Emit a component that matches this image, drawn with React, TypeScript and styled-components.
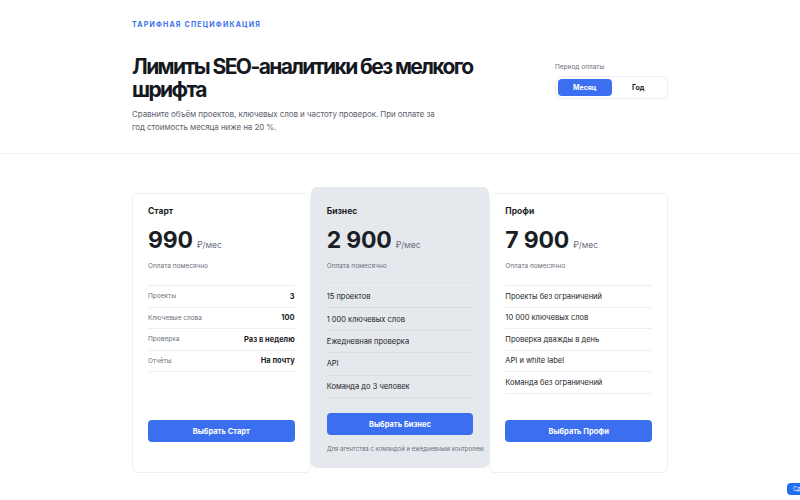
import React from 'react';
import styled, { createGlobalStyle } from 'styled-components';

const GlobalStyle = createGlobalStyle`
  * { box-sizing: border-box; }
  body {
    margin: 0;
    background: #ffffff;
    font-family: Inter, "Noto Sans", sans-serif;
    color: #1b1e25;
  }
`;

const Header = styled.header`
  border-bottom: 1px solid #eff0f2;
  padding: 20px 0 20px;
`;

const Inner = styled.div`
  width: 536px;
  margin: 0 auto;
`;

const HeaderRow = styled.div`
  display: flex;
  justify-content: space-between;
  align-items: flex-start;
`;

const Eyebrow = styled.div`
  font-size: 7px;
  font-weight: 700;
  letter-spacing: 1.2px;
  color: #3c6ff0;
  text-transform: uppercase;
  margin-bottom: 26px;
`;

const Title = styled.h1`
  margin: 0 0 7px;
  font-size: 21px;
  line-height: 23px;
  font-weight: 700;
  letter-spacing: -1.6px;
  width: 360px;
  color: #15181f;
`;

const Lead = styled.p`
  margin: 0;
  width: 312px;
  font-size: 8px;
  letter-spacing: -0.08px;
  line-height: 12.5px;
  color: #5d626d;
`;

const Period = styled.div`
  margin-top: 8px;
  width: 113px;
`;

const PeriodLabel = styled.div`
  font-size: 6.5px;
  color: #6b707b;
  margin-bottom: 5px;
`;

const Toggle = styled.div`
  display: grid;
  grid-template-columns: 1fr 1fr;
  padding: 2px;
  border: 1px solid #eceef1;
  border-radius: 6px;
  background: #fff;
`;

const ToggleButton = styled.button<{ $active?: boolean }>`
  border: 0;
  height: 17px;
  border-radius: 4px;
  font-family: inherit;
  font-size: 7px;
  font-weight: 700;
  background: ${({ $active }) => ($active ? '#3c6ff0' : 'transparent')};
  color: ${({ $active }) => ($active ? '#ffffff' : '#1b1e25')};
`;

const Plans = styled.div`
  display: grid;
  grid-template-columns: repeat(3, minmax(0, 1fr));
  align-items: start;
  margin-top: 39px;
`;

const Card = styled.section<{ $featured?: boolean }>`
  display: flex;
  flex-direction: column;
  min-height: ${({ $featured }) => ($featured ? '281px' : '280px')};
  margin-top: ${({ $featured }) => ($featured ? '-6px' : '0')};
  padding: ${({ $featured }) => ($featured ? '18px' : '12px')} 15px 15px;
  border-radius: 6px;
  background: ${({ $featured }) => ($featured ? '#e5e8ed' : '#ffffff')};
  border: 1px solid ${({ $featured }) => ($featured ? '#e5e8ed' : '#eceef1')};
  position: relative;
  z-index: ${({ $featured }) => ($featured ? 1 : 0)};
`;

const PlanName = styled.h2`
  margin: 0 0 11px;
  font-size: 8.5px;
  line-height: 10px;
  font-weight: 700;
`;

const PriceRow = styled.div`
  display: flex;
  align-items: baseline;
  gap: 4px;
  margin-bottom: 9px;
`;

const Price = styled.span`
  font-size: 23px;
  font-weight: 700;
  letter-spacing: -0.2px;
  line-height: 26px;
`;

const Unit = styled.span`
  font-size: 8.5px;
  color: #6b707b;
`;

const Billing = styled.div`
  font-size: 6.5px;
  line-height: 8px;
  color: #6b707b;
  margin-bottom: 15px;
`;

const List = styled.ul`
  list-style: none;
  margin: 0;
  padding: 0;
  border-top: 1px solid #eceef1;
`;

const Item = styled.li<{ $tall?: boolean }>`
  display: flex;
  justify-content: space-between;
  align-items: center;
  height: ${({ $tall }) => ($tall ? '22.4px' : '21.5px')};
  border-bottom: 1px solid ${({ $tall }) => ($tall ? '#d9dde3' : '#eceef1')};
  font-size: 7.5px;
  color: #1b1e25;
`;

const ItemLabel = styled.span<{ $muted?: boolean }>`
  font-size: ${({ $muted }) => ($muted ? '6.5px' : '7.5px')};
  color: ${({ $muted }) => ($muted ? '#6b707b' : '#1b1e25')};
`;

const ItemValue = styled.span`
  font-weight: 700;
  font-size: 7.5px;
`;

const Footer = styled.div`
  margin-top: auto;
  display: flex;
  flex-direction: column;
  gap: 10px;
  min-height: 37px;
`;

const SelectButton = styled.button`
  height: 22px;
  width: 100%;
  border: 0;
  border-radius: 4px;
  background: #3c6ff0;
  color: #fff;
  font-family: inherit;
  font-size: 7.5px;
  font-weight: 700;
`;

const Caption = styled.div`
  font-size: 6px;
  color: #6b707b;
  white-space: nowrap;
`;

const FloatingButton = styled.button`
  position: fixed;
  left: 787px;
  bottom: 5px;
  height: 12px;
  padding: 0 6px;
  border: 0;
  border-radius: 4px;
  background: #1f6ff2;
  color: #fff;
  font-family: inherit;
  font-size: 5.5px;
  white-space: nowrap;
`;

type Plan = {
  name: string;
  price: string;
  featured?: boolean;
  rows: { label: string; value?: string }[];
  caption?: string;
};

const plans: Plan[] = [
  {
    name: 'Старт',
    price: '990',
    rows: [
      { label: 'Проекты', value: '3' },
      { label: 'Ключевые слова', value: '100' },
      { label: 'Проверка', value: 'Раз в неделю' },
      { label: 'Отчёты', value: 'На почту' },
    ],
  },
  {
    name: 'Бизнес',
    price: '2 900',
    featured: true,
    rows: [
      { label: '15 проектов' },
      { label: '1 000 ключевых слов' },
      { label: 'Ежедневная проверка' },
      { label: 'API' },
      { label: 'Команда до 3 человек' },
    ],
    caption: 'Для агентства с командой и ежедневным контролем',
  },
  {
    name: 'Профи',
    price: '7 900',
    rows: [
      { label: 'Проекты без ограничений' },
      { label: '10 000 ключевых слов' },
      { label: 'Проверка дважды в день' },
      { label: 'API и white label' },
      { label: 'Команда без ограничений' },
    ],
  },
];

export default function App() {
  return (
    <>
      <GlobalStyle />
      <Header>
        <Inner>
          <Eyebrow>Тарифная спецификация</Eyebrow>
          <HeaderRow>
            <div>
              <Title>Лимиты SEO-аналитики без мелкого шрифта</Title>
              <Lead>
                Сравните объём проектов, ключевых слов и частоту проверок. При оплате за
                год стоимость месяца ниже на 20 %.
              </Lead>
            </div>
            <Period>
              <PeriodLabel>Период оплаты</PeriodLabel>
              <Toggle>
                <ToggleButton $active>Месяц</ToggleButton>
                <ToggleButton>Год</ToggleButton>
              </Toggle>
            </Period>
          </HeaderRow>
        </Inner>
      </Header>
      <Inner>
        <Plans>
          {plans.map((plan) => (
            <Card key={plan.name} $featured={plan.featured}>
              <PlanName>{plan.name}</PlanName>
              <PriceRow>
                <Price>{plan.price}</Price>
                <Unit>₽/мес</Unit>
              </PriceRow>
              <Billing>Оплата помесячно</Billing>
              <List>
                {plan.rows.map((row) => (
                  <Item key={row.label} $tall={plan.featured}>
                    <ItemLabel $muted={!!row.value}>{row.label}</ItemLabel>
                    {row.value && <ItemValue>{row.value}</ItemValue>}
                  </Item>
                ))}
              </List>
              <Footer>
                <SelectButton>Выбрать {plan.name}</SelectButton>
                {plan.caption && <Caption>{plan.caption}</Caption>}
              </Footer>
            </Card>
          ))}
        </Plans>
      </Inner>
      <FloatingButton>Сделать снимок</FloatingButton>
    </>
  );
}
